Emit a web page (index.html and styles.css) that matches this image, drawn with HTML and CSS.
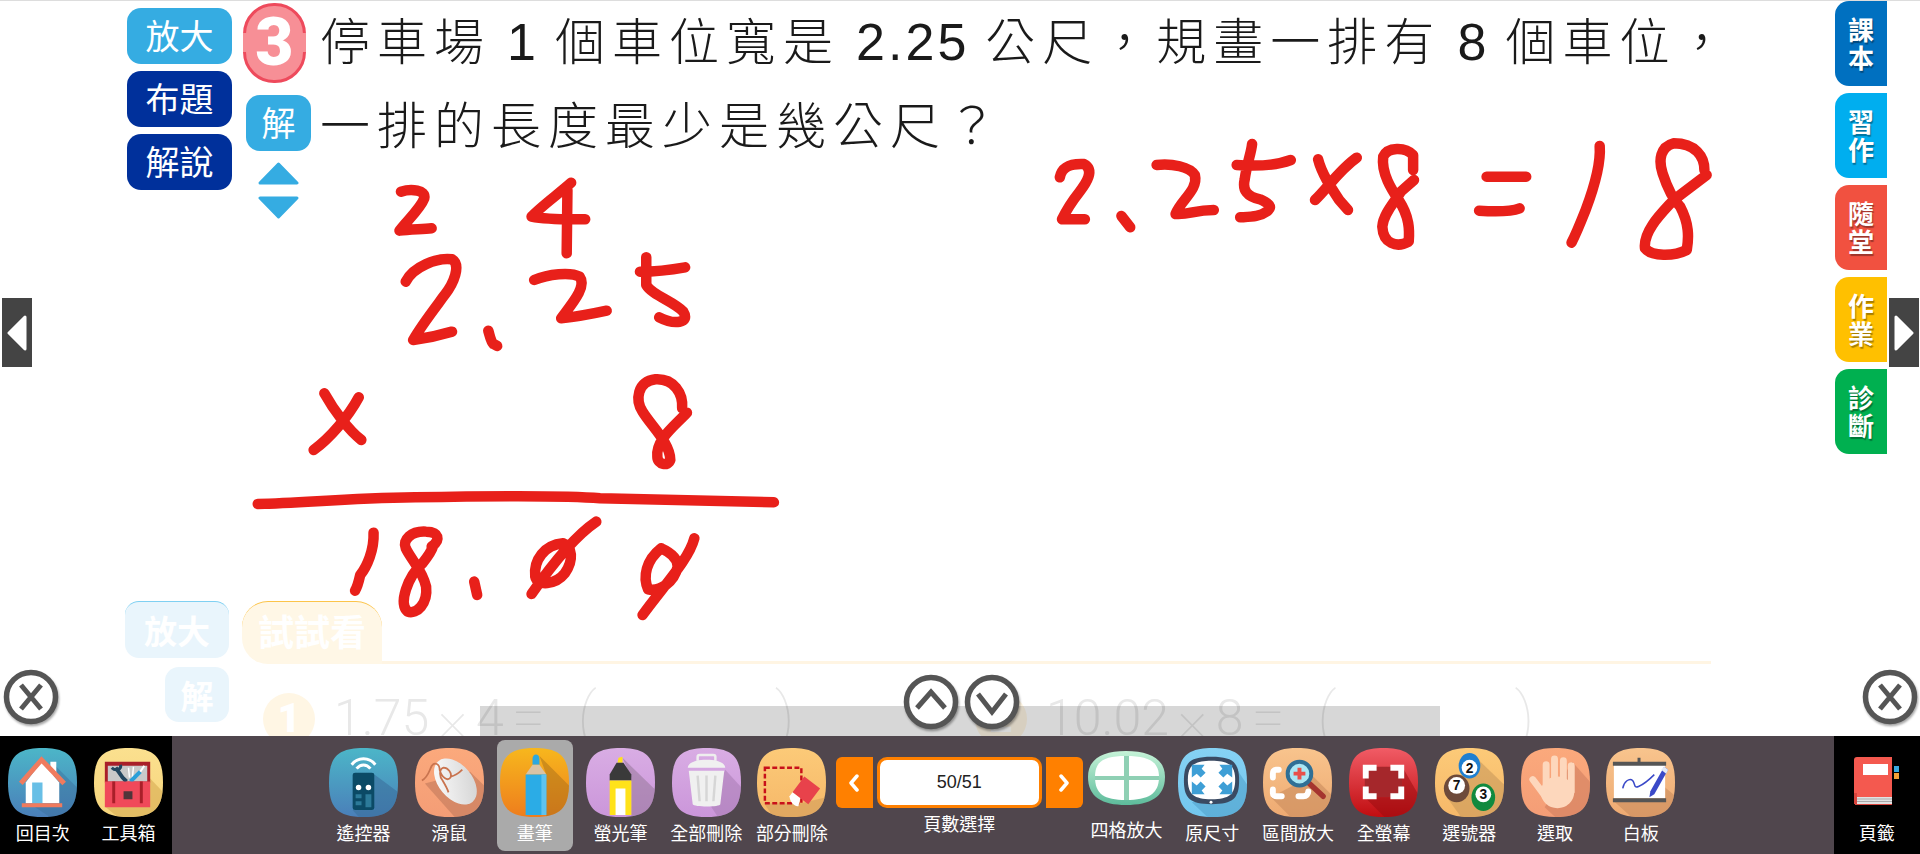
FILE: index.html
```html
<!DOCTYPE html>
<html lang="zh-Hant">
<head>
    <meta charset="UTF-8">
    <meta name="viewport" content="width=device-width, initial-scale=1.0">
    <title>電子書 - 數學</title>
    <link rel="stylesheet" href="styles.css">
</head>
<body>
    <!-- shared svg stuff -->
    <svg class="svg-defs" width="0" height="0" aria-hidden="true">
        <defs>
            <path id="sqPath" d="M35 0C62 0 70 10 70 35C70 60 62 70 35 70C8 70 0 60 0 35C0 10 8 0 35 0Z"/>
            <clipPath id="sq"><use href="#sqPath"/></clipPath>
            <linearGradient id="gBlue" x1="0" y1="0" x2="0" y2="1"><stop offset="0" stop-color="#4cb6c8"/><stop offset="1" stop-color="#4a7fb9"/></linearGradient>
            <linearGradient id="gYellow" x1="0" y1="0" x2="0" y2="1"><stop offset="0" stop-color="#fbe08f"/><stop offset="1" stop-color="#f6d57c"/></linearGradient>
            <linearGradient id="gSalmon" x1="0" y1="0" x2="0" y2="1"><stop offset="0" stop-color="#fba97c"/><stop offset="1" stop-color="#f49d76"/></linearGradient>
            <linearGradient id="gPen" x1="0" y1="0" x2="0" y2="1"><stop offset="0" stop-color="#f7b71d"/><stop offset="1" stop-color="#ee7d1d"/></linearGradient>
            <linearGradient id="gPurple" x1="0" y1="0" x2="0" y2="1"><stop offset="0" stop-color="#d9ade4"/><stop offset="1" stop-color="#cb96da"/></linearGradient>
            <linearGradient id="gPeach" x1="0" y1="0" x2="0" y2="1"><stop offset="0" stop-color="#fcca78"/><stop offset="1" stop-color="#f6b869"/></linearGradient>
            <linearGradient id="gTan" x1="0" y1="0" x2="0" y2="1"><stop offset="0" stop-color="#f8c48d"/><stop offset="1" stop-color="#eeaa72"/></linearGradient>
            <linearGradient id="gRed" x1="0" y1="0" x2="0" y2="1"><stop offset="0" stop-color="#f15c66"/><stop offset="1" stop-color="#c00d10"/></linearGradient>
            <linearGradient id="gSky" x1="0" y1="0" x2="0" y2="1"><stop offset="0" stop-color="#86d2f4"/><stop offset="1" stop-color="#72c6ee"/></linearGradient>
            <linearGradient id="gMint" x1="0" y1="0" x2="0" y2="1"><stop offset="0" stop-color="#c6f3d8"/><stop offset="1" stop-color="#5dbb9b"/></linearGradient>
            <linearGradient id="gMouse" x1="0" y1="0" x2="1" y2="1"><stop offset="0" stop-color="#ffffff"/><stop offset="1" stop-color="#cfcfcf"/></linearGradient>
            <symbol id="closeBtn" viewBox="0 0 56 56">
                <circle cx="28" cy="28" r="24.500" fill="#fff" stroke="#555" stroke-width="5.500"/>
                <path d="M18 16L38 40M38 16L18 40" fill="none" stroke="#555" stroke-width="5"/>
            </symbol>
            <symbol id="upBtn" viewBox="0 0 56 56">
                <circle cx="28" cy="28" r="24.500" fill="#fff" stroke="#555" stroke-width="5.500"/>
                <path d="M14 34L28 18L42 34" fill="none" stroke="#555" stroke-width="5"/>
            </symbol>
            <symbol id="downBtn" viewBox="0 0 56 56">
                <circle cx="28" cy="28" r="24.500" fill="#fff" stroke="#555" stroke-width="5.500"/>
                <path d="M14 20L28 38L42 20" fill="none" stroke="#555" stroke-width="5"/>
            </symbol>
        </defs>
    </svg>

    <main class="stage">
        <div class="lesson">
            <section class="problem">
                <div class="side-btns">
                    <button class="btn btn-light">放大</button>
                    <button class="btn btn-dark">布題</button>
                    <button class="btn btn-dark">解說</button>
                </div>
                <div class="num-col">
                    <div class="num-badge"><span>3</span></div>
                    <button class="btn btn-light btn-solve">解</button>
                    <svg class="sort-arrows" width="41" height="57" viewBox="0 0 41 57">
                        <path d="M20.500 2L39 21H2Z" fill="#35ace2" stroke="#35ace2" stroke-width="3" stroke-linejoin="round"/>
                        <path d="M2 36H39L20.500 55Z" fill="#35ace2" stroke="#35ace2" stroke-width="3" stroke-linejoin="round"/>
                    </svg>
                </div>
                <p class="question">停車場 <b>1</b> 個車位寬是 <b>2.25</b> 公尺，規畫一排有 <b>8</b> 個車位，<br>一排的長度最少是幾公尺？</p>
            </section>

            <section class="practice">
                <div class="practice-head">
                    <div class="ghost-btn ghost-zoom">放大</div>
                    <div class="try-tab">試試看</div>
                    <div class="try-line"></div>
                </div>
                <div class="practice-row">
                    <div class="ghost-btn ghost-solve">解</div>
                    <div class="ex ex-first">
                        <span class="ex-num">1</span>
                        <div class="ex-text"><span>1.75</span><span class="op">×</span><span>4</span><span class="op">=</span><span class="paren">(</span><span class="paren paren-end">)</span></div>
                    </div>
                    <div class="ex">
                        <span class="ex-num">2</span>
                        <div class="ex-text"><span>10.02</span><span class="op">×</span><span>8</span><span class="op">=</span><span class="paren">(</span><span class="paren paren-end">)</span></div>
                    </div>
                </div>
            </section>
        </div>

        <nav class="tabs">
            <a class="tab tab-book">課<br>本</a>
            <a class="tab tab-work">習<br>作</a>
            <a class="tab tab-quiz">隨<br>堂</a>
            <a class="tab tab-home">作<br>業</a>
            <a class="tab tab-test">診<br>斷</a>
        </nav>

        <!-- overlays -->
        <div class="scroll-strip"></div>

        <svg class="ink" width="1920" height="735" viewBox="0 1 1920 735">
            <g transform="translate(230 170) scale(.37 .3333)">
                <path d="M462 65C490 55 530 60 525 85C515 115 480 150 458 182C485 178 520 178 545 175"/>
                <path d="M922 38C890 70 840 110 815 140C860 150 920 148 960 148M912 60L910 250"/>
                <path d="M475 335C495 290 560 262 600 268C625 285 605 340 580 375C550 420 515 470 495 510C530 505 570 495 600 485"/>
                <path d="M698 482C703 500 705 515 712 522L722 528"/>
                <path d="M822 330C860 312 920 305 945 320C965 350 925 400 895 445C940 440 985 430 1018 422"/>
                <path d="M1125 262L1125 345C1140 375 1200 395 1225 425C1245 460 1200 465 1160 442M1108 305C1150 305 1190 300 1230 292"/>
                <path d="M255 670C280 720 320 780 355 810M348 682C320 740 270 805 226 840"/>
                <path d="M1222 715C1225 670 1200 625 1150 628C1100 635 1095 690 1115 725C1140 770 1190 820 1190 870C1185 890 1155 885 1155 860C1150 810 1200 770 1235 728"/>
                <path d="M75 1002C200 1000 300 985 500 982C700 978 900 975 1000 985C1200 990 1350 995 1470 997"/>
                <path d="M388 1088C390 1140 370 1190 352 1215C348 1235 345 1250 338 1262"/>
                <path d="M545 1130C570 1110 565 1085 530 1085C490 1082 465 1110 475 1135C490 1170 520 1200 530 1250C535 1300 505 1335 480 1325C455 1300 480 1220 520 1180C535 1160 545 1145 550 1125"/>
                <path d="M660 1235L668 1275"/>
                <path d="M900 1120C850 1125 820 1170 825 1220C830 1250 880 1245 905 1210C930 1170 925 1130 900 1120M990 1055C930 1100 860 1200 815 1272"/>
                <path d="M1165 1135C1125 1170 1115 1220 1130 1258C1160 1265 1200 1240 1210 1190C1210 1160 1185 1145 1165 1135M1255 1105C1240 1170 1170 1250 1115 1335"/>
            </g>
            <g transform="translate(1040 120) scale(.44 .3333)">
                <path d="M45 172C50 140 70 130 100 132C125 150 105 190 90 215C75 240 60 270 50 298L102 298"/>
                <path d="M185 288L205 322"/>
                <path d="M265 135C300 130 340 140 352 165C360 210 320 240 308 282C340 285 350 270 395 270"/>
                <path d="M482 72C480 100 470 130 465 180C460 210 470 230 500 238C520 250 530 260 515 275C500 290 480 290 455 292M447 135C480 138 530 140 570 120"/>
                <path d="M632 118C640 160 660 200 680 240L700 270M720 113C680 150 650 210 625 240"/>
                <path d="M848 150L848 105C830 80 790 80 780 110C775 160 800 210 815 240C840 290 840 330 838 365C810 385 780 370 778 320C780 280 810 240 820 215L850 180"/>
                <path d="M1015 170L1105 170M998 272C1030 275 1070 275 1090 265"/>
                <path d="M1272 78C1275 130 1260 200 1240 270C1225 320 1215 350 1208 368"/>
                <path d="M1510 150C1510 110 1490 70 1440 70C1410 80 1405 120 1415 160C1425 200 1440 240 1455 260C1475 310 1475 350 1470 390C1440 410 1390 410 1375 385C1370 330 1420 270 1440 240C1470 210 1500 180 1515 165"/>
            </g>
        </svg>

        <a class="page-arrow page-prev"><svg width="20" height="36" viewBox="0 0 20 36"><path d="M18 2V34L2 18Z" fill="#fff" stroke="#fff" stroke-width="3" stroke-linejoin="round"/></svg></a>
        <a class="page-arrow page-next"><svg width="20" height="36" viewBox="0 0 20 36"><path d="M2 2V34L18 18Z" fill="#fff" stroke="#fff" stroke-width="3" stroke-linejoin="round"/></svg></a>

        <svg class="round-btn close-left"><use href="#closeBtn"/></svg>
        <svg class="round-btn close-right"><use href="#closeBtn"/></svg>
        <svg class="round-btn scroll-up"><use href="#upBtn"/></svg>
        <svg class="round-btn scroll-down"><use href="#downBtn"/></svg>
    </main>

    <footer class="toolbar">
        <div class="tool-group tool-group-left">
            <div class="tool">
                <svg class="icon" viewBox="0 0 70 70">
                    <use href="#sqPath" fill="url(#gBlue)"/>
                    <g clip-path="url(#sq)">
                        <path d="M45 15L75 45V75H50L20 55Z" fill="#3b6f9c" opacity=".45"/>
                        <path d="M43 14H49V28H43Z" fill="#fff"/>
                        <path d="M18 35L34 14L52 35V56H18Z" fill="#fff"/>
                        <path d="M13 36L34 12L57 36" fill="none" stroke="#ef7b5e" stroke-width="5"/>
                        <path d="M24.500 35H35V56H24.500Z" fill="#68bfe6"/>
                        <path d="M14 56H55V60H14Z" fill="#ef7b5e"/>
                    </g>
                </svg>
                <span class="tool-label">回目次</span>
            </div>
            <div class="tool">
                <svg class="icon" viewBox="0 0 70 70">
                    <use href="#sqPath" fill="url(#gYellow)"/>
                    <g clip-path="url(#sq)">
                        <path d="M56 30L75 50V75H30L12 60Z" fill="#dcb25a" opacity=".7"/>
                        <path d="M11 14H57V35H11Z" fill="#a91f29"/>
                        <path d="M14 18H54V34H14Z" fill="#c9c9c9"/>
                        <path d="M22 20L29 30L33 34" fill="none" stroke="#23465f" stroke-width="4"/>
                        <path d="M18 20C22 24 28 22 27 17" fill="none" stroke="#23465f" stroke-width="3"/>
                        <path d="M35 20L36 30M40 19L39 30" stroke="#fff" stroke-width="1.500"/>
                        <path d="M37 34L47 24" stroke="#2b9fd8" stroke-width="4"/>
                        <path d="M47 24L51 18" stroke="#fff" stroke-width="2"/>
                        <path d="M11 34H57V60H11Z" fill="#f0495a"/>
                        <path d="M20 34V56M48 34V56" stroke="#a91f29" stroke-width="3"/>
                        <path d="M30 44H39V52H30Z" fill="#50353a"/>
                    </g>
                </svg>
                <span class="tool-label">工具箱</span>
            </div>
        </div>

        <div class="tool-group tool-group-main">
            <div class="tool">
                <svg class="icon" viewBox="0 0 70 70">
                    <use href="#sqPath" fill="url(#gBlue)"/>
                    <g clip-path="url(#sq)">
                        <path d="M46 27L72 46V72H32L24 63H46Z" fill="#3b6f9c" opacity=".6"/>
                        <path d="M23 17C29 9 41 9 47 17M28 21C32 16 38 16 42 21" fill="none" stroke="#fff" stroke-width="3"/>
                        <rect x="24" y="25" width="22" height="38" rx="2.500" fill="#0b4a66"/>
                        <circle cx="30" cy="40" r="2.800" fill="#fff"/>
                        <circle cx="40" cy="40" r="2.800" fill="#fff"/>
                        <path d="M27 47H33V51H27ZM27 54H33V58H27ZM37 47H43V60H37Z" fill="#2c7a99"/>
                    </g>
                </svg>
                <span class="tool-label">遙控器</span>
            </div>
            <div class="tool">
                <svg class="icon" viewBox="0 0 70 70">
                    <use href="#sqPath" fill="url(#gSalmon)"/>
                    <g clip-path="url(#sq)">
                        <path d="M10 36L42 72H72V40L56 24Z" fill="#c97f5f" opacity=".7"/>
                        <ellipse cx="41" cy="34" rx="17" ry="27" transform="rotate(-40 41 34)" fill="url(#gMouse)"/>
                        <path d="M7 33C13 30 14 24 17 18C20 14 25 16 25 22C27 30 33 34 36 30C38 25 33 20 29 20C25 21 24 28 28 33C31 38 33 42 34 45M36 29C42 28 46 24 48 22" fill="none" stroke="#c9744f" stroke-width="1.800"/>
                    </g>
                </svg>
                <span class="tool-label">滑鼠</span>
            </div>
            <div class="tool tool-active">
                <svg class="icon" viewBox="0 0 70 70">
                    <use href="#sqPath" fill="url(#gPen)"/>
                    <g clip-path="url(#sq)">
                        <path d="M40 8L72 40V72H47V27Z" fill="#a7701a" opacity=".5"/>
                        <path d="M33 11C33 5 40 5 40 11V17H33Z" fill="#2ba8e0"/>
                        <path d="M33 17H40L47 27H26Z" fill="#d9c3a5"/>
                        <path d="M26 27H47V68H26Z" fill="#2bace6"/>
                        <path d="M42 27H47V68H42Z" fill="#5ec3ef"/>
                    </g>
                </svg>
                <span class="tool-label">畫筆</span>
            </div>
            <div class="tool">
                <svg class="icon" viewBox="0 0 70 70">
                    <use href="#sqPath" fill="url(#gPurple)"/>
                    <g clip-path="url(#sq)">
                        <path d="M37 10L72 44V72H46V30Z" fill="#8f7392" opacity=".5"/>
                        <path d="M32 15L33 10L37 9V15Z" fill="#ffe21a"/>
                        <path d="M31 15H38L46 27V33H24V27Z" fill="#3a3a3a"/>
                        <path d="M24 33H46V68H24Z" fill="#ffe21a"/>
                        <path d="M30 41H40V68H30Z" fill="#fff"/>
                    </g>
                </svg>
                <span class="tool-label">螢光筆</span>
            </div>
            <div class="tool">
                <svg class="icon" viewBox="0 0 70 70">
                    <use href="#sqPath" fill="url(#gPurple)"/>
                    <g clip-path="url(#sq)">
                        <path d="M54 22L75 45V75H50L40 60Z" fill="#a77bb3" opacity=".55"/>
                        <path d="M26 13V9C26 8 27 7 28 7H42C43 7 44 8 44 9V13" fill="none" stroke="#eee" stroke-width="2.500"/>
                        <path d="M16 20C16 15 24 12 35 12C46 12 54 15 54 20Z" fill="#f0f0f0"/>
                        <path d="M17 23H53L49 57C49 60 22 60 21 57Z" fill="#f0f0f0"/>
                        <path d="M26 28L28 54M35 28V54M44 28L42 54" stroke="#d6d6d6" stroke-width="2.500"/>
                    </g>
                </svg>
                <span class="tool-label">全部刪除</span>
            </div>
            <div class="tool">
                <svg class="icon" viewBox="0 0 70 70">
                    <use href="#sqPath" fill="url(#gPeach)"/>
                    <g clip-path="url(#sq)">
                        <path d="M7 56H45L70 50V75H20Z" fill="#cf9a5a" opacity=".55"/>
                        <path d="M8 20H45V56H8Z" fill="none" stroke="#c8101a" stroke-width="2.500" stroke-dasharray="5 2.500"/>
                        <path d="M48 29L64 41L52 57L36 45Z" fill="#e8424b"/>
                        <path d="M36 45L44 51L42 59C38 60 33 54 33 49Z" fill="#fff"/>
                    </g>
                </svg>
                <span class="tool-label">部分刪除</span>
            </div>

            <div class="pager">
                <div class="pager-row">
                    <button class="pager-btn pager-btn-prev"><svg width="12" height="18" viewBox="0 0 12 18"><path d="M9 2L3 9L9 16" fill="none" stroke="#fff" stroke-width="3.500" stroke-linejoin="round" stroke-linecap="round"/></svg></button>
                    <input class="pager-input" type="text" value="50/51" readonly>
                    <button class="pager-btn pager-btn-next"><svg width="12" height="18" viewBox="0 0 12 18"><path d="M3 2L9 9L3 16" fill="none" stroke="#fff" stroke-width="3.500" stroke-linejoin="round" stroke-linecap="round"/></svg></button>
                </div>
                <span class="tool-label">頁數選擇</span>
            </div>

            <div class="tool tool-grid">
                <svg class="icon icon-grid" viewBox="0 0 77 54">
                    <path d="M38 0C62 0 77 8 77 26C77 46 62 54 38 54C14 54 0 46 0 26C0 8 14 0 38 0Z" fill="url(#gMint)"/>
                    <path d="M38 5C60 5 71 10 71 26C71 43 60 49 38 49C16 49 7 43 7 26C7 10 16 5 38 5Z" fill="#fff"/>
                    <path d="M36 5H41V49H36ZM7 25H71V29H7Z" fill="#8fd0b4"/>
                </svg>
                <span class="tool-label">四格放大</span>
            </div>
            <div class="tool">
                <svg class="icon" viewBox="0 0 70 70">
                    <use href="#sqPath" fill="url(#gSky)"/>
                    <g clip-path="url(#sq)">
                        <path d="M14 55L32 72H72V40L60 22V48Z" fill="#4f9fc8" opacity=".55"/>
                        <path d="M34 9C56 9 62 15 62 33C62 51 56 57 34 57C12 57 6 51 6 33C6 15 12 9 34 9Z" fill="#3a4a62"/>
                        <path d="M34 13C52 13 58 18 58 32C58 47 52 52 34 52C16 52 10 47 10 32C10 18 16 13 34 13Z" fill="#fff"/>
                        <path d="M14 17H27L24 21L28 25L23 30L19 26L14 30ZM55 17H42L45 21L41 25L46 30L50 26L55 30ZM14 47H27L24 43L28 39L23 34L19 38L14 34ZM55 47H42L45 43L41 39L46 34L50 38L55 34Z" fill="#3e9fd6"/>
                        <circle cx="33.500" cy="55" r="1.500" fill="#fff"/>
                    </g>
                </svg>
                <span class="tool-label">原尺寸</span>
            </div>
            <div class="tool">
                <svg class="icon" viewBox="0 0 70 70">
                    <use href="#sqPath" fill="url(#gTan)"/>
                    <g clip-path="url(#sq)">
                        <path d="M8 50L30 72H72V50L50 28Z" fill="#c98c5d" opacity=".6"/>
                        <path d="M16 22H13C11 22 10 24 10 26V30M10 42V46C10 48 12 49 14 49H19M36 49H41C44 49 46 47 46 44" fill="none" stroke="#fff" stroke-width="6" stroke-linecap="round"/>
                        <path d="M47 36L61 49" stroke="#a5352f" stroke-width="5.500" stroke-linecap="round"/>
                        <circle cx="37" cy="26" r="12" fill="#a9e6f4" stroke="#2f6f95" stroke-width="4"/>
                        <path d="M31 26H43M37 20V32" stroke="#e8504a" stroke-width="4"/>
                    </g>
                </svg>
                <span class="tool-label">區間放大</span>
            </div>
            <div class="tool">
                <svg class="icon" viewBox="0 0 70 70">
                    <use href="#sqPath" fill="url(#gRed)"/>
                    <g clip-path="url(#sq)">
                        <path d="M16 19H54V50H16Z" fill="#a5272b"/>
                        <path d="M16 50L38 72H72V50L54 19V50Z" fill="#9a0d10" opacity=".55"/>
                        <path d="M28 20H17V31M42 20H53V31M28 49H17V39M42 49H53V39" fill="none" stroke="#fff" stroke-width="6"/>
                    </g>
                </svg>
                <span class="tool-label">全螢幕</span>
            </div>
            <div class="tool">
                <svg class="icon" viewBox="0 0 70 70">
                    <use href="#sqPath" fill="url(#gPeach)"/>
                    <g clip-path="url(#sq)">
                        <path d="M40 8L75 42V75H30L12 50Z" fill="#c4955a" opacity=".55"/>
                        <ellipse cx="35" cy="18" rx="11" ry="13" fill="#1f7fd0"/>
                        <circle cx="35" cy="20" r="8" fill="#fff"/>
                        <ellipse cx="22" cy="41" rx="13" ry="14" fill="#6d4a3a"/>
                        <circle cx="22" cy="38" r="8.500" fill="#fff"/>
                        <ellipse cx="49" cy="50" rx="12" ry="14" fill="#118a3e"/>
                        <circle cx="49" cy="47" r="8" fill="#fff"/>
                        <text class="ball-num" x="35" y="25">2</text>
                        <text class="ball-num" x="22" y="43">7</text>
                        <text class="ball-num" x="49" y="52">3</text>
                    </g>
                </svg>
                <span class="tool-label">選號器</span>
            </div>
            <div class="tool">
                <svg class="icon" viewBox="0 0 70 70">
                    <use href="#sqPath" fill="url(#gSalmon)"/>
                    <g clip-path="url(#sq)">
                        <path d="M52 14L75 40V75H40L24 60Z" fill="#d17e5f" opacity=".6"/>
                        <path d="M25.500 17V42M34 11V42M43 13V42M51 18V44M12 32L24 48" fill="none" stroke="#fdd7bc" stroke-width="7" stroke-linecap="round"/>
                        <ellipse cx="37" cy="45" rx="17" ry="16" fill="#fdd7bc"/>
                    </g>
                </svg>
                <span class="tool-label">選取</span>
            </div>
            <div class="tool">
                <svg class="icon" viewBox="0 0 70 70">
                    <use href="#sqPath" fill="url(#gTan)"/>
                    <g clip-path="url(#sq)">
                        <path d="M8 54L28 72H72V50L60 40V54Z" fill="#c98c5d" opacity=".6"/>
                        <path d="M32 10H35V15H32Z" fill="#555"/>
                        <path d="M8 17H60V51H8Z" fill="#fff"/>
                        <path d="M7 14H61V18H7ZM7 51H61V55H7Z" fill="#555"/>
                        <path d="M17 41C18 34 24 30 27 33C30 37 28 41 33 39C38 37 43 33 49 27" fill="none" stroke="#3a49c8" stroke-width="1.500"/>
                        <path d="M59 19L45 44L44 50L49 47L63 22Z" fill="#3a49c8"/>
                        <path d="M56 22L59 19L63 22L61 26Z" fill="#e4eaf6"/>
                    </g>
                </svg>
                <span class="tool-label">白板</span>
            </div>
        </div>

        <div class="tool-group tool-group-right">
            <div class="tool tool-book">
                <svg class="icon icon-book" viewBox="0 0 45 48">
                    <path d="M0 3C0 1 1 0 3 0H38V40H3C1 40 0 39 0 37Z" fill="#f4594f"/>
                    <path d="M9 7H34V18H9Z" fill="#fff"/>
                    <path d="M40 9H45V15H40Z" fill="#38a8e0"/>
                    <path d="M40 16H45V22H40Z" fill="#f2a037"/>
                    <path d="M1 40H38V47H1Z" fill="#e2e2e2"/>
                    <path d="M1 47H38V48H1Z M0 36H3V47H0Z" fill="#d8453d"/>
                    <path d="M3 42H38M3 44.500H38" stroke="#aaa"/>
                </svg>
                <span class="tool-label">頁籤</span>
            </div>
        </div>
    </footer>
</body>
</html>
```

FILE: styles.css
```css
* {
    box-sizing: border-box;
}

html, body {
    height: 100%;
}

body {
    margin: 0;
    display: flex;
    flex-direction: column;
    height: 854px;
    overflow: hidden;
    background: #fff;
    border-top: 1px solid #ddd;
    font-family: "Noto Sans CJK TC", "Liberation Sans", sans-serif;
}

.svg-defs {
    position: absolute;
}

/* page area */
.stage {
    position: relative;
    display: flex;
    height: 735px;
    overflow: hidden;
}

.lesson {
    flex: 1;
    padding-left: 125px;
}

.problem {
    display: flex;
    align-items: flex-start;
    height: 600px;
    padding-left: 2px;
}

.btn {
    display: block;
    padding: 0 0 3px;
    border: none;
    color: #fff;
    font-family: inherit;
    font-size: 34px;
    line-height: 1;
    border-radius: 14px;
}

.btn-light {
    background: #35ace2;
}

.btn-dark {
    background: #00309b;
}

.side-btns {
    display: flex;
    flex-direction: column;
    gap: 7px;
    width: 105px;
    margin-top: 7px;
}

.side-btns .btn {
    height: 56px;
}

.num-col {
    width: 68px;
    margin: 2px 0 0 11px;
}

.num-badge {
    position: relative;
    width: 63px;
    height: 80px;
    border: 3px solid #ee4a5c;
    border-radius: 31px;
    background: #f78f96;
    text-align: center;
}

.num-badge::before {
    content: "";
    position: absolute;
    left: -3px;
    right: -3px;
    top: 27px;
    height: 19px;
    background: #f78f96;
}

.num-badge span {
    position: relative;
    color: #fff;
    font-family: Roboto, sans-serif;
    font-size: 66px;
    font-weight: 900;
    line-height: 74px;
}

.btn-solve {
    width: 65px;
    height: 56px;
    margin: 12px 0 0 3px;
}

.sort-arrows {
    display: block;
    margin: 11px 0 0 15px;
}

.question {
    margin: -3px 0 0 9px;
    color: #1a1a1a;
    font-size: 50px;
    font-weight: 300;
    line-height: 80px;
    letter-spacing: 7px;
    word-spacing: -2px;
    white-space: nowrap;
}

.question b {
    font-family: "Liberation Sans", sans-serif;
    font-size: 52px;
    font-weight: 400;
    letter-spacing: 3px;
}

/* faded practice block under the problem */
.practice {
    padding-right: 124px;
}

.practice-head {
    display: flex;
    align-items: flex-start;
    height: 63px;
}

.ghost-btn {
    display: flex;
    align-items: center;
    justify-content: center;
    background: #e9f5fc;
    color: #fff;
    font-size: 33px;
    font-weight: 700;
    border-radius: 14px;
}

.ghost-zoom {
    width: 104px;
    height: 57px;
    border-top: 1px solid #7fd0f2;
}

.try-tab {
    width: 140px;
    height: 63px;
    margin-left: 13px;
    background: #fff7e6;
    border-top: 1px solid #fcc44a;
    border-radius: 26px 26px 0 26px;
    color: #fff;
    font-size: 36px;
    font-weight: 700;
    line-height: 56px;
    text-align: center;
}

.try-line {
    flex: 1;
    align-self: flex-end;
    height: 3px;
    background: #fff5e3;
}

.practice-row {
    display: flex;
    align-items: flex-start;
    margin-top: 3px;
}

.ghost-solve {
    width: 64px;
    height: 55px;
    margin-left: 40px;
}

.ex {
    display: flex;
    width: 712px;
    margin-top: 26px;
    align-items: flex-start;
}

.ex-first {
    margin-left: 34px;
}

.ex-num {
    width: 52px;
    height: 52px;
    margin-right: 19px;
    border-radius: 50%;
    background: #fff6e4;
    color: #fff;
    font-family: Roboto, sans-serif;
    font-size: 40px;
    font-weight: 900;
    line-height: 52px;
    text-align: center;
}

.ex-text {
    display: flex;
    gap: 8px;
    margin-top: -6px;
    color: #e8e8e8;
    font-family: Roboto, sans-serif;
    font-size: 50px;
    font-weight: 300;
    line-height: 62px;
    white-space: nowrap;
}

.op {
    font-size: 60px;
    font-weight: 100;
}

.paren {
    margin-left: 24px;
    font-size: 66px;
    font-weight: 100;
}

.paren-end {
    margin-left: 170px;
}

/* right side tabs */
.tabs {
    display: flex;
    flex-direction: column;
    gap: 7px;
    width: 52px;
    margin-right: 33px;
}

.tab {
    display: flex;
    align-items: center;
    justify-content: center;
    height: 85px;
    padding-bottom: 2px;
    color: #fff;
    font-size: 26px;
    font-weight: 700;
    line-height: 28px;
    text-align: center;
    text-shadow: 1px 2px 1px rgba(0, 0, 0, 0.35);
    border-radius: 14px 0 0 14px;
}

.tab-book { background: #0070c0; }
.tab-work { background: #00aeef; }
.tab-quiz { background: #f15140; }
.tab-home { background: #ffc000; }
.tab-test { background: #00b050; }

/* things lying over the page */
.scroll-strip {
    position: absolute;
    left: 480px;
    top: 705px;
    width: 960px;
    height: 30px;
    background: rgba(0, 0, 0, 0.155);
}

.ink {
    position: absolute;
    left: 0;
    top: 0;
    pointer-events: none;
}

.ink path {
    fill: none;
    stroke: #e8201a;
    stroke-width: 10.5;
    stroke-linecap: round;
    stroke-linejoin: round;
    vector-effect: non-scaling-stroke;
}

.page-arrow {
    position: absolute;
    top: 297px;
    display: flex;
    align-items: center;
    justify-content: center;
    width: 30px;
    height: 69px;
    background: #444;
}

.page-prev { left: 2px; }
.page-next { left: 1889px; }

.round-btn {
    position: absolute;
    width: 56px;
    height: 56px;
    filter: drop-shadow(1px 2px 1px rgba(0, 0, 0, 0.35));
}

.close-left { left: 3px; top: 668px; }
.close-right { left: 1862px; top: 668px; }
.scroll-up { left: 903px; top: 673px; }
.scroll-down { left: 964px; top: 673px; }

/* bottom toolbar */
.toolbar {
    display: flex;
    height: 118px;
    color: #fff;
}

.tool-group {
    display: flex;
    align-items: flex-start;
}

.tool-group-left {
    width: 172px;
    background: #000;
}

.tool-group-main {
    flex: 1;
    padding-left: 148.6px;
    background: #50464d;
}

.tool-group-right {
    width: 86px;
    background: #000;
}

.tool {
    display: flex;
    flex-direction: column;
    align-items: center;
    width: 85.7px;
    padding-top: 12px;
}

.tool-active {
    width: 75.7px;
    margin: 4px 5px 0;
    height: 111px;
    padding-top: 8px;
    background: #aaa;
    border-radius: 8px;
}

.icon {
    display: block;
    width: 69px;
    height: 69px;
}

.tool-label {
    margin-top: 5px;
    font-size: 18px;
    font-weight: 400;
    line-height: 20px;
    white-space: nowrap;
}

.tool-grid {
    padding-top: 15px;
}

.icon-grid {
    width: 77px;
    height: 54px;
}

.tool-grid .tool-label {
    margin-top: 14px;
}

.tool-book {
    padding-top: 21px;
}

.icon-book {
    width: 45px;
    height: 48px;
}

.tool-book .tool-label {
    margin-top: 17px;
}

.ball-num {
    font-family: "Liberation Sans", sans-serif;
    font-size: 14px;
    font-weight: 700;
    text-anchor: middle;
    fill: #111;
}

/* page number picker */
.pager {
    display: flex;
    flex-direction: column;
    align-items: center;
    width: 249px;
    padding-top: 21px;
}

.pager .tool-label {
    margin-top: 5px;
}

.pager-row {
    display: flex;
    gap: 4px;
    height: 51px;
}

.pager-btn {
    display: flex;
    align-items: center;
    justify-content: center;
    width: 37px;
    padding: 0;
    border: none;
    background: #ff8000;
}

.pager-btn-prev {
    border-radius: 6px 0 0 6px;
}

.pager-btn-next {
    border-radius: 0 6px 6px 0;
}

.pager-input {
    width: 165px;
    border: 3px solid #ff8000;
    border-radius: 10px;
    background: #fff;
    color: #222;
    font-family: "Liberation Sans", sans-serif;
    font-size: 18px;
    text-align: center;
    outline: none;
}
```
